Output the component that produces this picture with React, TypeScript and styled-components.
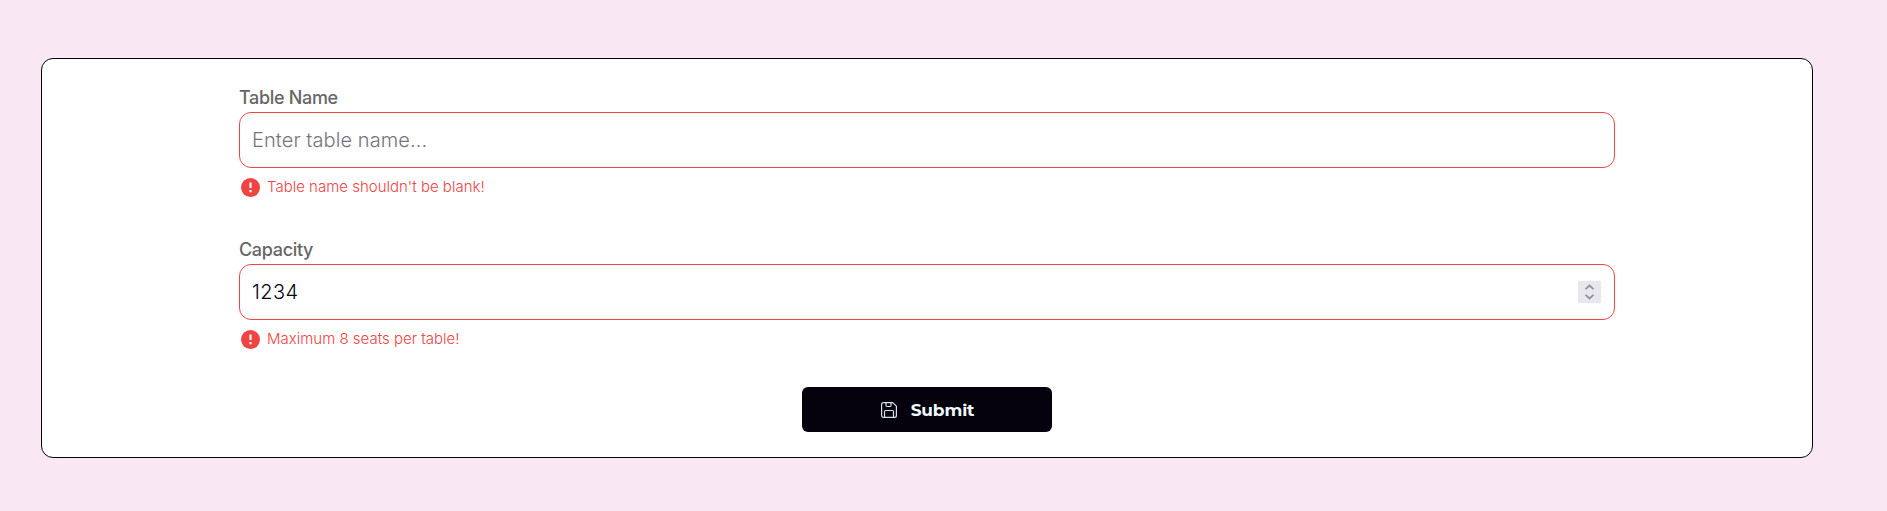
import React from "react";
import styled, { createGlobalStyle } from "styled-components";

const GlobalStyle = createGlobalStyle`
  *, *::before, *::after { box-sizing: border-box; }
  html { background: #f9e8f3; }
  body {
    margin: 0;
    color: #05010d;
    font-family: Inter, "Liberation Sans", sans-serif;
    font-weight: 300;
  }
`;

const Page = styled.main`
  min-height: 100vh;
  padding: 58px 74px 53px 41px;
  background: #f9e8f3;
`;

const Form = styled.form`
  height: 400px;
  padding: 26px 197px 0;
  display: flex;
  flex-direction: column;
  align-items: center;
  background: #fff;
  border: 1px solid #05010d;
  border-radius: 12px;
`;

const Field = styled.div`
  width: 100%;
  height: 152px;
  display: flex;
  flex-direction: column;
`;

const Label = styled.label`
  height: 27px;
  font-size: 18px;
  font-weight: 500;
  line-height: 26px;
  letter-spacing: -0.33px;
  color: #666;
`;

const Control = styled.div`
  height: 56px;
  display: flex;
  align-items: center;
  padding: 0 13px 0 12px;
  border: 1px solid #ef4444;
  border-radius: 12px;
`;

const Input = styled.input`
  flex: 1;
  min-width: 0;
  height: 30px;
  padding: 0;
  border: 0;
  outline: 0;
  background: transparent;
  color: #05010d;
  font: 300 20px/30px Inter, "Liberation Sans", sans-serif;
  letter-spacing: 0.45px;
  &::placeholder { color: #757580; opacity: 1; letter-spacing: 0.08px; }
`;

const Stepper = styled.span`
  width: 23px;
  height: 22px;
  background: #e8e7ed;
  svg { display: block; }
`;

const ErrorLine = styled.p`
  margin: 7px 0 0;
  padding-left: 2px;
  height: 24px;
  display: flex;
  align-items: center;
  gap: 7px;
  color: #ef4444;
  font-size: 15px;
  line-height: 24px;
`;

const SubmitButton = styled.button`
  width: 250px;
  height: 45px;
  margin-top: -2px;
  padding: 0 0 0 1px;
  display: flex;
  align-items: center;
  justify-content: center;
  gap: 14px;
  border: 0;
  border-radius: 6px;
  background: #05010d;
  color: #effbff;
  font: 700 17px/24px Montserrat, Inter, "Liberation Sans", sans-serif;
  letter-spacing: -0.15px;
`;

const ErrorIcon = () => (
  <svg width="19" height="19" viewBox="0 0 19 19">
    <circle cx="9.5" cy="9.5" r="9.5" fill="#ef4444" />
    <path d="M9.5 4.5v5.4M9.5 11.9v2.3" stroke="#fff" strokeWidth="2.1" />
  </svg>
);

const SaveIcon = () => (
  <svg width="16" height="16" viewBox="0 0 16 16" fill="none" stroke="#d5e3e6" strokeWidth="1.2" strokeLinejoin="round">
    <path d="M2.5.6h9.3l3.6 3.6v9.3a1.9 1.9 0 0 1-1.9 1.9h-11a1.9 1.9 0 0 1-1.9-1.9v-11A1.9 1.9 0 0 1 2.5.6Z" />
    <path d="M5 .8v2.6a1.1 1.1 0 0 0 1.1 1.1h2.8A1.1 1.1 0 0 0 10 3.4V.8M3.5 15.2V9.6a1.1 1.1 0 0 1 1.1-1.1h6.8a1.1 1.1 0 0 1 1.1 1.1v5.6" />
  </svg>
);

const StepArrows = () => (
  <svg width="23" height="22" viewBox="0 0 23 22" fill="none" stroke="#9290a2" strokeWidth="1.8">
    <path d="m7.5 8.2 4-3.7 4 3.7M7.5 13.8l4 3.7 4-3.7" />
  </svg>
);

export default function App() {
  return (
    <>
      <GlobalStyle />
      <Page>
        <Form noValidate onSubmit={(e) => e.preventDefault()}>
          <Field>
            <Label htmlFor="name">Table Name</Label>
            <Control><Input id="name" placeholder="Enter table name..." /></Control>
            <ErrorLine><ErrorIcon />Table name shouldn't be blank!</ErrorLine>
          </Field>
          <Field>
            <Label htmlFor="capacity">Capacity</Label>
            <Control>
              <Input id="capacity" inputMode="numeric" defaultValue="1234" />
              <Stepper><StepArrows /></Stepper>
            </Control>
            <ErrorLine><ErrorIcon />Maximum 8 seats per table!</ErrorLine>
          </Field>
          <SubmitButton type="submit"><SaveIcon />Submit</SubmitButton>
        </Form>
      </Page>
    </>
  );
}
